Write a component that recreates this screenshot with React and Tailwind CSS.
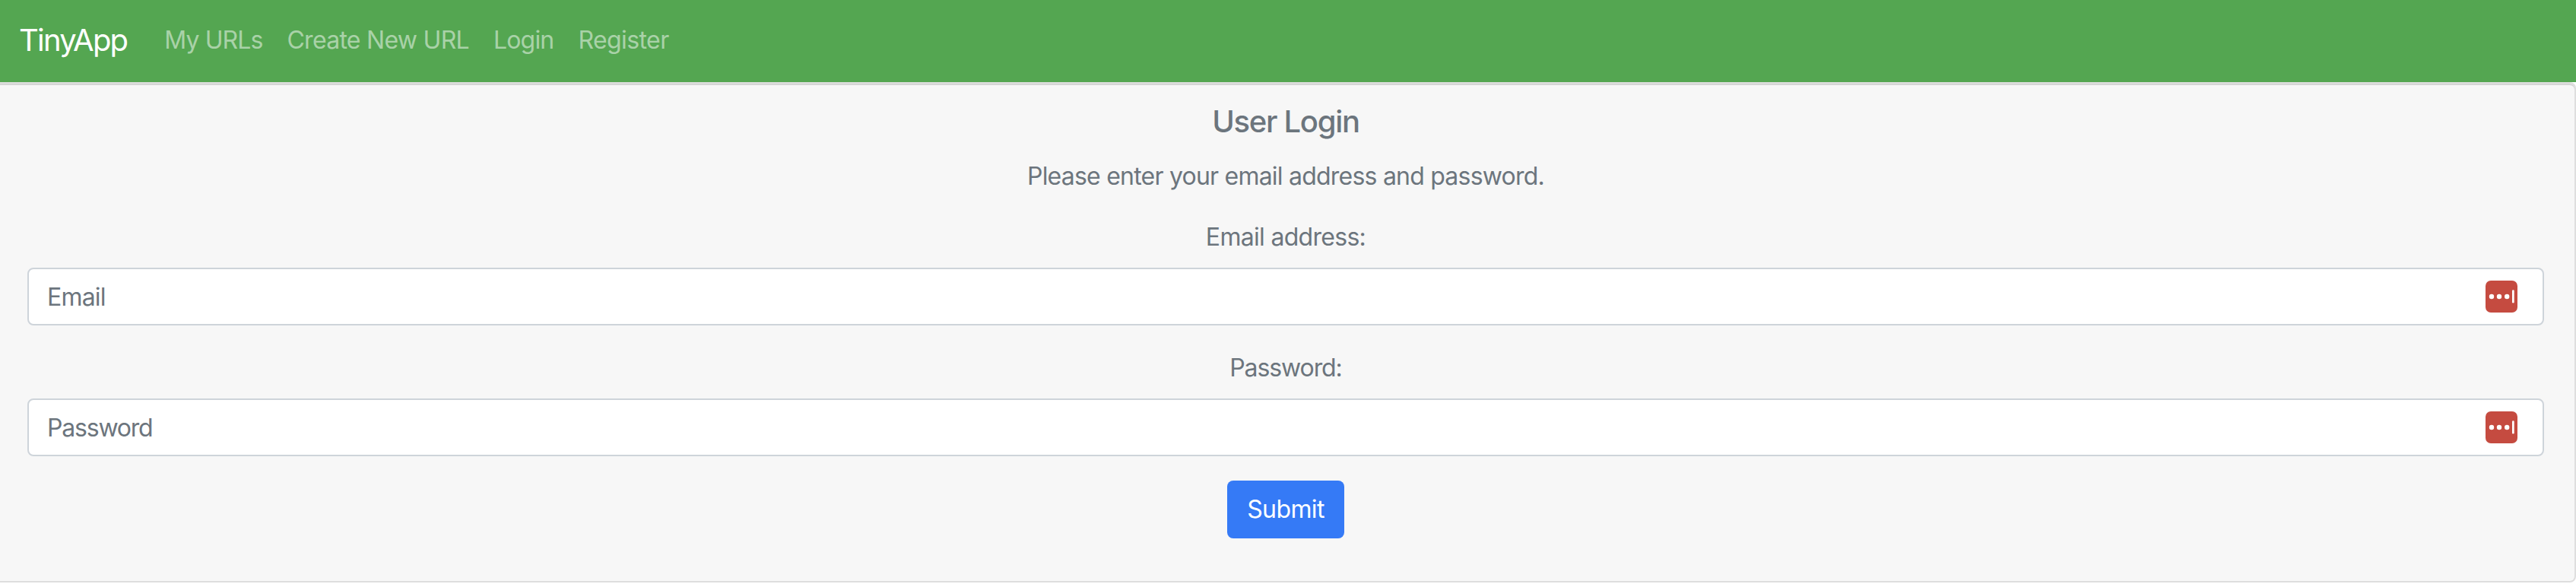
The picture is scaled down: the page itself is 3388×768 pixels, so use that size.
const navLinks = [
  { label: "My URLs", className: "tracking-[-0.9px]" },
  { label: "Create New URL", className: "tracking-[-0.72px]" },
  { label: "Login", className: "tracking-[-0.8px]" },
  { label: "Register", className: "tracking-[-0.6px]" },
];

function PasswordManagerIcon() {
  return (
    <svg width="42" height="42" viewBox="0 0 42 42" className="mb-px shrink-0">
      <rect width="42" height="42" rx="7" fill="#c54b40" />
      <circle cx="8" cy="21" r="3.2" fill="#fff" />
      <circle cx="18" cy="21" r="3.2" fill="#fff" />
      <circle cx="28.2" cy="21" r="3.2" fill="#fff" />
      <rect x="35" y="12.3" width="2.7" height="17.2" rx="1.3" fill="#fff" />
    </svg>
  );
}

function Field({ type, placeholder, className }) {
  return (
    <div className="flex h-[76px] items-center rounded-lg border-2 border-[#ced4da] bg-white pr-[33px] pl-6">
      <input
        type={type}
        placeholder={placeholder}
        className={`h-full min-w-0 flex-1 bg-transparent text-[32px] outline-none placeholder:text-[#6c757d] ${className}`}
      />
      <PasswordManagerIcon />
    </div>
  );
}

export default function App() {
  return (
    <div className="h-[768px] w-full bg-white font-['Inter','Liberation_Sans',sans-serif] text-[32px] leading-[48px] text-[#6c757d]">
      <nav className="flex h-[108px] items-center bg-[#54a651] pb-[3px] pl-[25px]">
        <a href="#" className="mr-[33px] text-[40px] tracking-[-1.8px] text-white">
          <span>TinyApp</span>
        </a>
        {navLinks.map((link) => (
          <a key={link.label} href="#" className="px-4 text-white/50">
            <span className={link.className}>{link.label}</span>
          </a>
        ))}
      </nav>
      <main className="flex h-[658px] flex-col rounded-r-lg border-2 border-l-0 border-[#dedede] bg-[#f7f7f7] pt-[26px] pr-10 pl-9 text-center shadow-[inset_0_2px_0_#d5d5d5]">
        <h1 className="text-[40px] leading-[48px] font-medium tracking-[-1.3px]"><span>User Login</span></h1>
        <p className="mt-6 tracking-[-0.78px]"><span>Please enter your email address and password.</span></p>
        <form className="mt-8 flex flex-col" onSubmit={(event) => event.preventDefault()}>
          <label className="mb-4 tracking-[-0.7px]"><span>Email address:</span></label>
          <Field type="email" placeholder="Email" className="tracking-[-0.8px]" />
          <label className="mt-8 mb-4 tracking-[-1.1px]"><span>Password:</span></label>
          <Field type="password" placeholder="Password" className="tracking-[-1.2px]" />
          <button className="mt-8 h-[76px] w-[154px] self-center rounded-lg bg-[#357af6] tracking-[-0.6px] text-white">
            <span>Submit</span>
          </button>
        </form>
      </main>
    </div>
  );
}
